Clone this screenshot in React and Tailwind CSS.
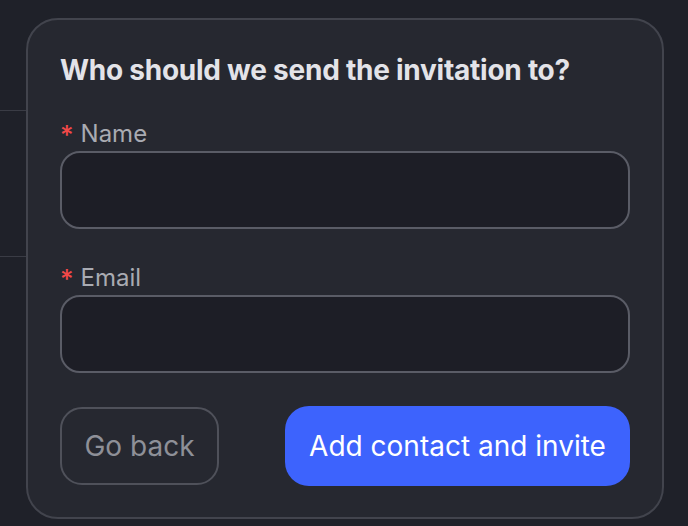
export default function App() {
  return (
    <div className="min-h-[526px] w-[688px] bg-[#1f2129] flex font-['Inter',sans-serif] overflow-hidden">
      <div className="w-[26px] shrink-0">
        <div className="mt-[110px] h-[147px] border-y border-[#3a3c45]" />
      </div>
      <div className="mt-[18px] w-[638px] h-[501px] rounded-[32px] border-2 border-[#42444d] bg-[#262830] px-[32px] pt-[34px] flex flex-col">
        <h2 className="text-[28px] leading-[32px] font-bold text-[#e3e3e8] tracking-[-0.25px]">Who should we send the invitation to?</h2>

        <label className="mt-[34px] flex items-center h-[28px] text-[24px] text-[#a9abb2]">
          <span className="text-[#f34848] text-[26px] font-medium mr-[7px] leading-none mt-[2px]">*</span>
          Name
        </label>
        <input className="mt-[3px] h-[78px] w-full rounded-[20px] border-2 border-[#5a5c66] bg-[#1d1e26] outline-none px-4 text-white" />

        <label className="mt-[35px] flex items-center h-[28px] text-[24px] text-[#a9abb2]">
          <span className="text-[#f34848] text-[26px] font-medium mr-[7px] leading-none mt-[2px]">*</span>
          Email
        </label>
        <input className="mt-[3px] h-[78px] w-full rounded-[20px] border-2 border-[#5a5c66] bg-[#1d1e26] outline-none px-4 text-white" />

        <div className="mt-[33px] flex items-center justify-between">
          <button className="h-[78px] w-[159px] rounded-[22px] border-2 border-[#4f515a] text-[28px] text-[#8e9098]">Go back</button>
          <button className="h-[80px] w-[345px] rounded-[24px] bg-[#3d63fd] text-[28px] text-white">Add contact and invite</button>
        </div>
      </div>
    </div>
  );
}
